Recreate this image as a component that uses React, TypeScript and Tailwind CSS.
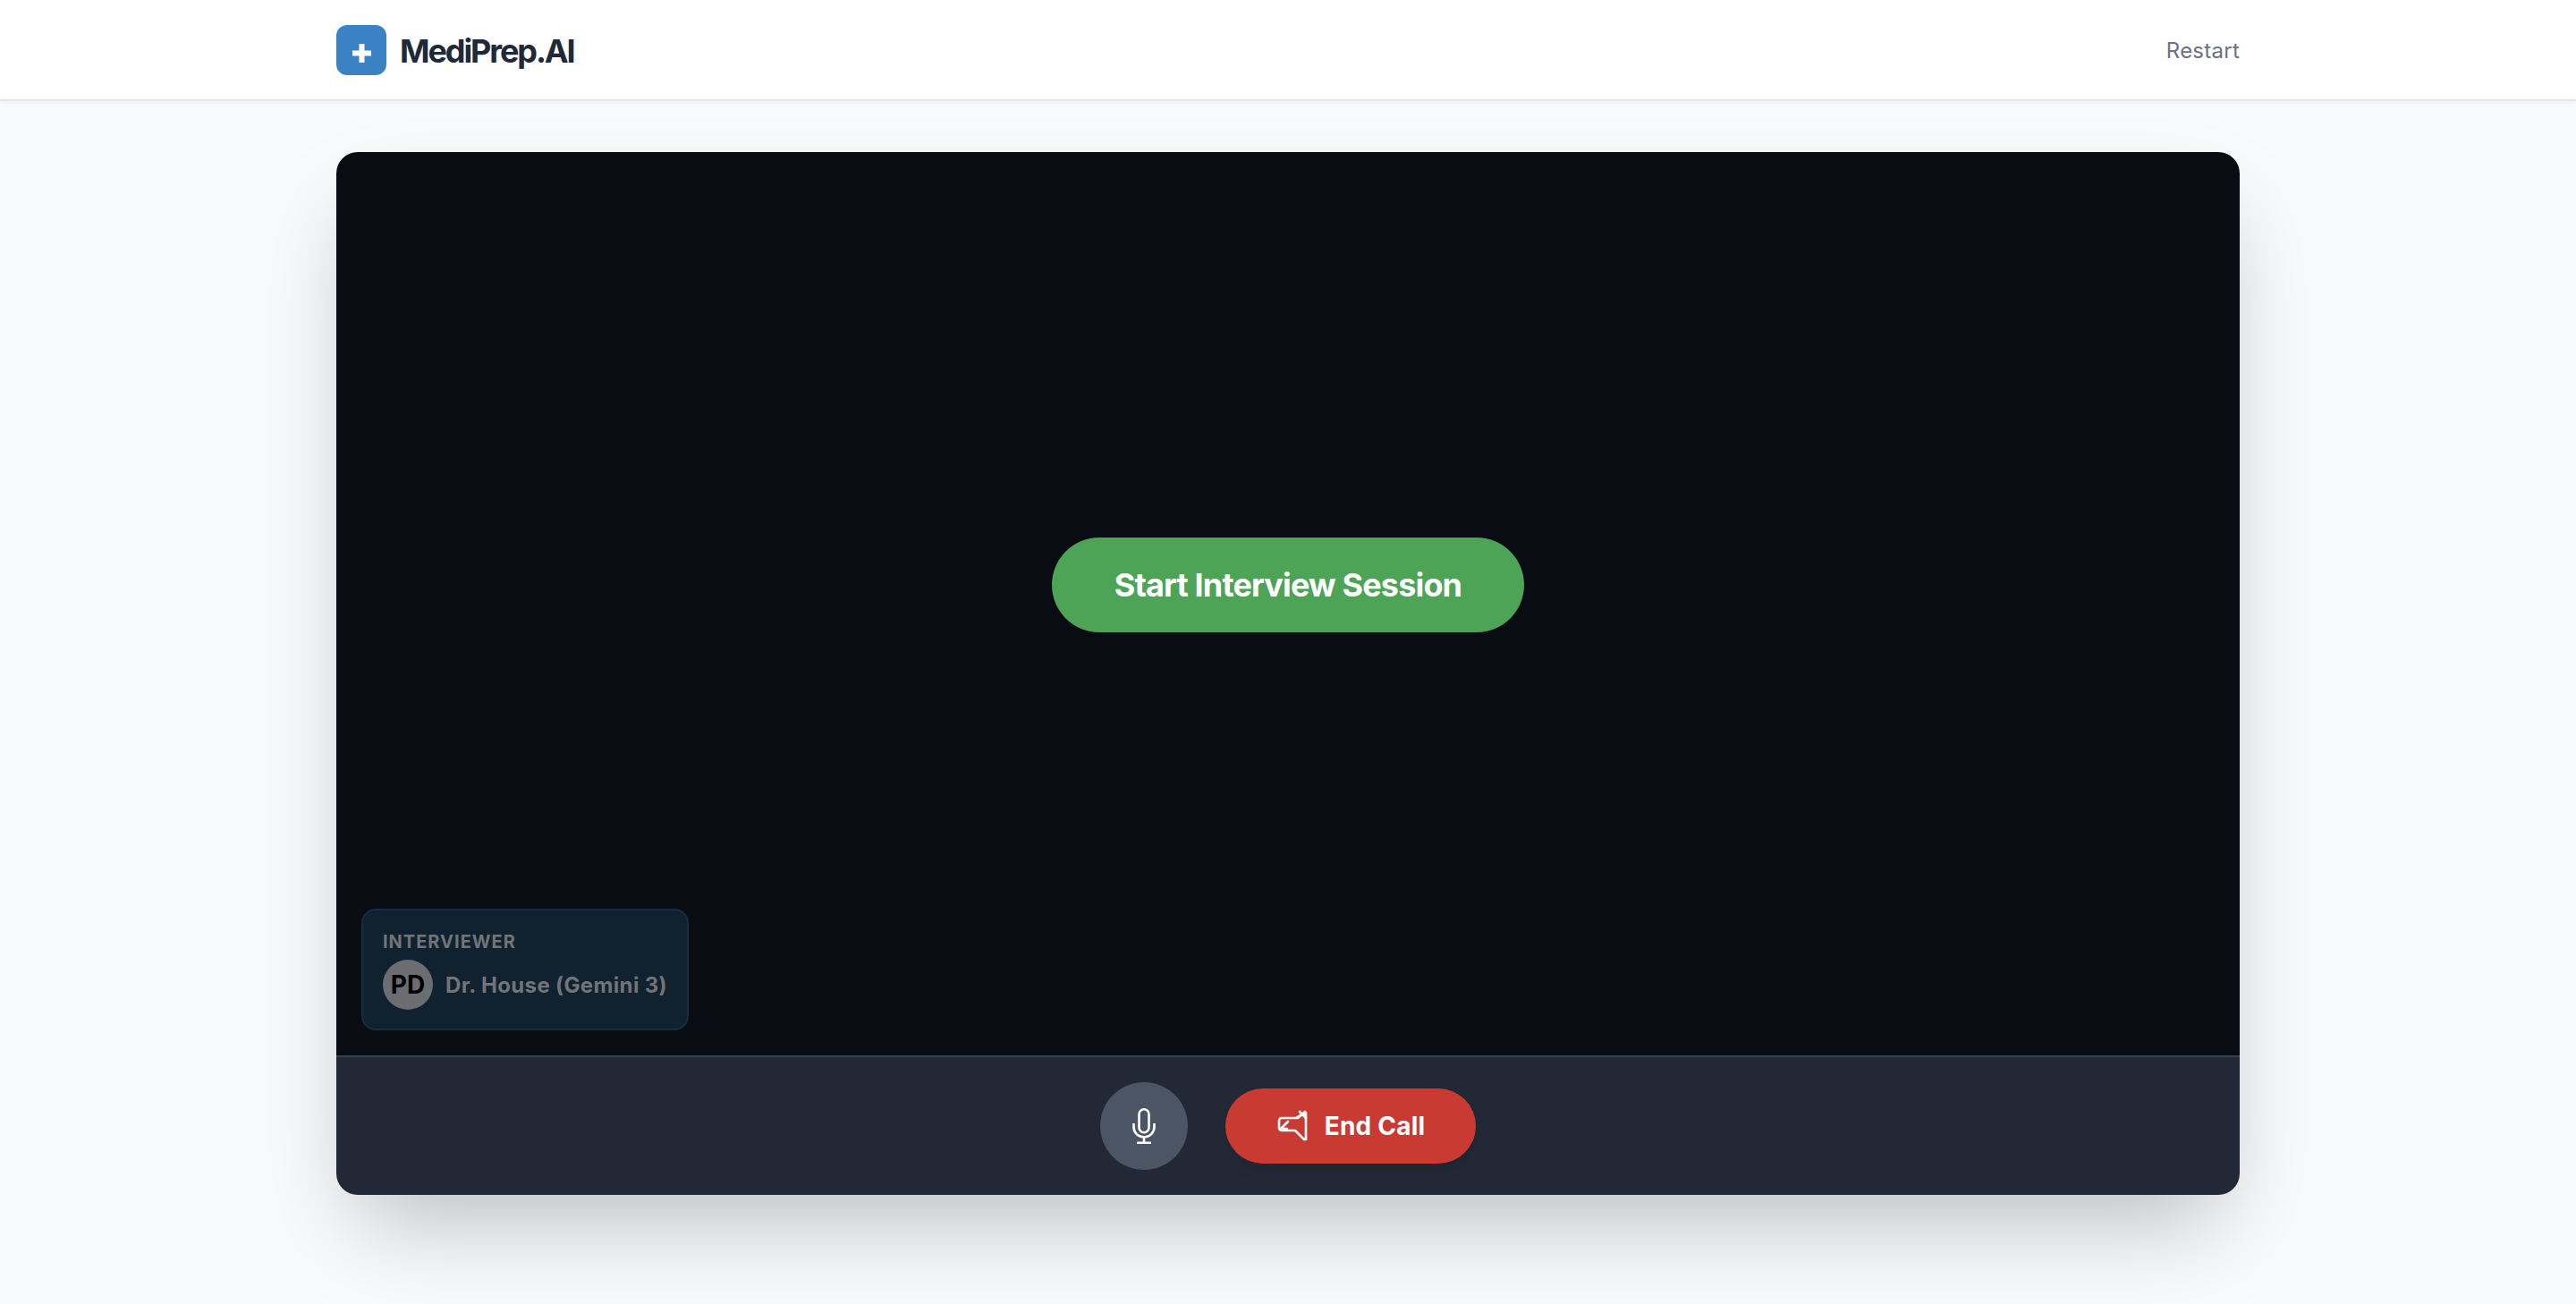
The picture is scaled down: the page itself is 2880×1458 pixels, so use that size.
import React from "react";

export default function App() {
  return (
    <div className="min-h-[1458px] bg-[#f8fafc] flex flex-col font-['Inter',sans-serif]">
      <header className="h-[113px] bg-white border-b-2 border-[#e5e7eb] shadow-[0_2px_4px_rgba(0,0,0,0.05)] flex justify-center">
        <div className="w-[2128px] flex items-center justify-between">
          <div className="flex items-center gap-[15px]">
            <div className="w-[56px] h-[56px] rounded-[12px] bg-[#3b82c4] flex items-center justify-center">
              <svg width="21" height="21" viewBox="0 0 21 21" className="mt-[7px]">
                <path d="M7.5 0h6v7.5H21v6h-7.5V21h-6v-7.5H0v-6h7.5z" fill="#fff" />
              </svg>
            </div>
            <span className="text-[36px] leading-[40px] font-bold text-[#1f2937] tracking-[-2.1px] mt-[2px]">MediPrep.AI</span>
          </div>
          <span className="text-[24px] leading-[32px] text-[#6b7280] tracking-[0.25px] mt-[3px]">Restart</span>
        </div>
      </header>
      <main className="flex justify-center pt-[57px]">
        <div className="w-[2128px] h-[1166px] rounded-[24px] overflow-hidden flex flex-col shadow-[0_50px_100px_-24px_rgba(0,0,0,0.25)]">
          <div className="relative flex-1 bg-[#090c13] flex items-center justify-center">
            <button className="h-[106px] w-[528px] mb-[42px] rounded-full bg-[#4da356] text-white font-bold text-[36px] leading-[40px] tracking-[-0.85px]">
              Start Interview Session
            </button>
            <div className="absolute left-[28px] bottom-[28px] w-[366px] h-[136px] rounded-[16px] bg-[#102130] border-2 border-[#162e43] px-[22px] pt-[21px]">
              <div className="text-[20px] leading-[28px] font-bold tracking-[1px] text-[#727477]">INTERVIEWER</div>
              <div className="flex items-center gap-[14px] mt-[6px]">
                <div className="w-[56px] h-[56px] rounded-full bg-[#6b6d71] flex items-center justify-center text-[28px] font-bold text-black">PD</div>
                <span className="text-[24px] leading-[32px] font-bold text-[#727477] tracking-[0.35px] mt-[2px]">Dr. House (Gemini 3)</span>
              </div>
            </div>
          </div>
          <div className="h-[156px] bg-[#222835] border-t-2 border-[#374151] flex items-center justify-center gap-[42px]">
            <div className="w-[98px] h-[98px] rounded-full bg-[#4b5563] flex items-center justify-center">
              <svg width="26" height="40" viewBox="0 0 26 40" fill="none" stroke="#fff" strokeWidth="2.6">
                <rect x="7.5" y="1.3" width="11" height="26" rx="5.5" />
                <path d="M1.5 17v4a11.5 11.5 0 0 0 23 0v-4M13 32.5V38.7M5 38.7h16" />
              </svg>
            </div>
            <button className="h-[84px] w-[280px] rounded-full bg-[#c93a32] flex items-center justify-center gap-[18px] text-white font-bold text-[28px] tracking-[0.2px] shadow-[0_10px_15px_-3px_rgba(0,0,0,0.1)]">
              <svg width="36" height="36" viewBox="0 0 36 36" fill="none" stroke="#fff" strokeWidth="2.6" strokeLinejoin="round" strokeLinecap="round">
                <path d="M3 12a3 3 0 0 1 3-3h16l11-6v30l-2 0-10-10H6a3 3 0 0 1-3-3z" />
                <path d="M24 9l8-7M33 9l-7-7M5 21l8-8M8 21l4 0" />
              </svg>
              End Call
            </button>
          </div>
        </div>
      </main>
    </div>
  );
}
